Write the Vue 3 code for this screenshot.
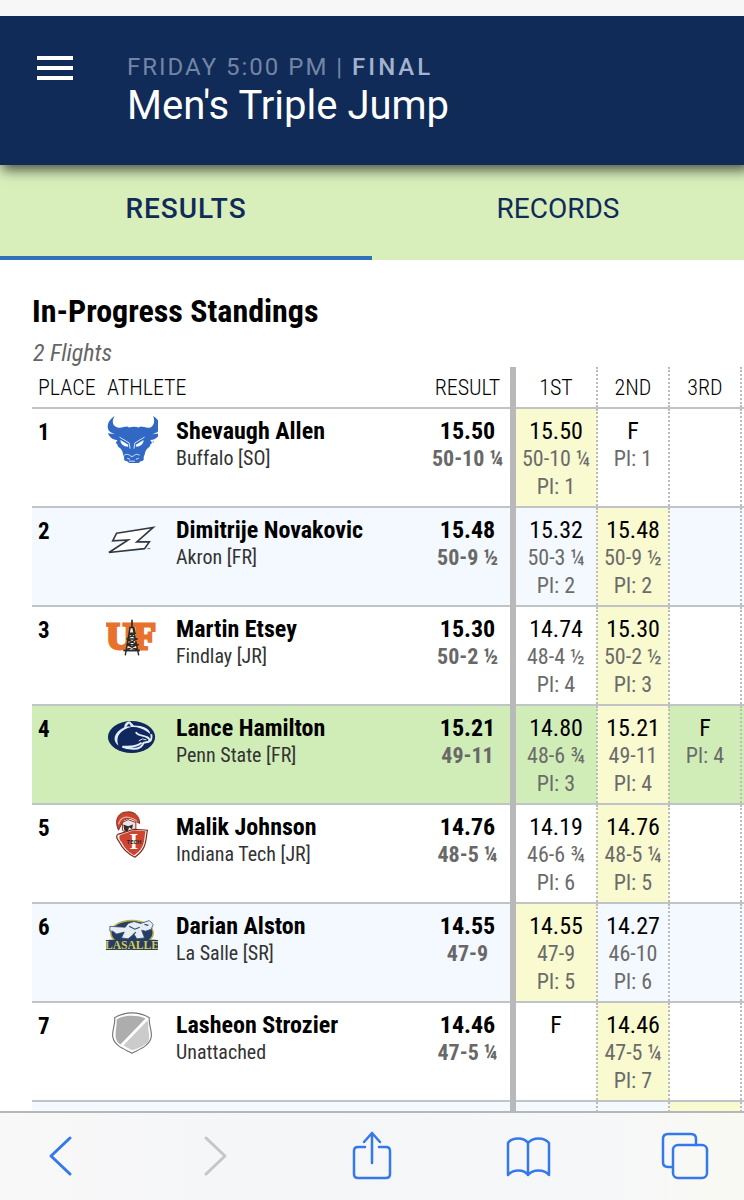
<script setup>
import { ref } from 'vue'

const tab = ref('results')
const rounds = ['1st', '2nd', '3rd', '']

const athletes = [
  { place: 1, logo: 'buffalo', name: 'Shevaugh Allen', team: 'Buffalo [SO]', mark: '15.50', imperial: '50-10 ¼',
    attempts: [{ mark: '15.50', imperial: '50-10 ¼', pl: 1, best: true }, { mark: 'F', pl: 1 }, {}, {}] },
  { place: 2, logo: 'akron', name: 'Dimitrije Novakovic', team: 'Akron [FR]', mark: '15.48', imperial: '50-9 ½',
    attempts: [{ mark: '15.32', imperial: '50-3 ¼', pl: 2 }, { mark: '15.48', imperial: '50-9 ½', pl: 2, best: true }, {}, {}] },
  { place: 3, logo: 'findlay', name: 'Martin Etsey', team: 'Findlay [JR]', mark: '15.30', imperial: '50-2 ½',
    attempts: [{ mark: '14.74', imperial: '48-4 ½', pl: 4 }, { mark: '15.30', imperial: '50-2 ½', pl: 3, best: true }, {}, {}] },
  { place: 4, logo: 'pennstate', name: 'Lance Hamilton', team: 'Penn State [FR]', mark: '15.21', imperial: '49-11', active: true,
    attempts: [{ mark: '14.80', imperial: '48-6 ¾', pl: 3 }, { mark: '15.21', imperial: '49-11', pl: 4, best: true }, { mark: 'F', pl: 4 }, {}] },
  { place: 5, logo: 'indiana', name: 'Malik Johnson', team: 'Indiana Tech [JR]', mark: '14.76', imperial: '48-5 ¼',
    attempts: [{ mark: '14.19', imperial: '46-6 ¾', pl: 6 }, { mark: '14.76', imperial: '48-5 ¼', pl: 5, best: true }, {}, {}] },
  { place: 6, logo: 'lasalle', name: 'Darian Alston', team: 'La Salle [SR]', mark: '14.55', imperial: '47-9',
    attempts: [{ mark: '14.55', imperial: '47-9', pl: 5, best: true }, { mark: '14.27', imperial: '46-10', pl: 6 }, {}, {}] },
  { place: 7, logo: 'unattached', name: 'Lasheon Strozier', team: 'Unattached', mark: '14.46', imperial: '47-5 ¼',
    attempts: [{ mark: 'F' }, { mark: '14.46', imperial: '47-5 ¼', pl: 7, best: true }, {}, {}] },
  { attempts: [{}, {}, { best: true }, {}] }
]
</script>

<template>
  <div class="screen">
    <header class="app-bar">
      <button class="menu" type="button" aria-label="Menu"><i></i><i></i><i></i></button>
      <div class="titles">
        <p class="when">FRIDAY 5:00 PM | <b>FINAL</b></p>
        <h1>Men's Triple Jump</h1>
      </div>
    </header>

    <nav class="tabs">
      <button type="button" :class="{ on: tab === 'results' }" @click="tab = 'results'">RESULTS</button>
      <button type="button" :class="{ on: tab === 'records' }" @click="tab = 'records'">RECORDS</button>
    </nav>

    <main>
      <h2>In-Progress Standings</h2>
      <p class="flights">2 Flights</p>
      <table>
        <colgroup>
          <col class="c-place" /><col class="c-logo" /><col /><col class="c-result" />
          <col class="c-first" /><col v-for="n in 3" :key="n" class="c-round" />
        </colgroup>
        <thead>
          <tr>
            <th class="place">PLACE</th>
            <th class="athlete" colspan="2">ATHLETE</th>
            <th class="result">RESULT</th>
            <th v-for="r in rounds" :key="r" class="round">{{ r }}</th>
          </tr>
        </thead>
        <tbody>
          <tr v-for="(a, i) in athletes" :key="i" :class="{ active: a.active }">
            <td class="place">{{ a.place }}</td>
            <td class="logo">
              <svg v-if="a.logo === 'buffalo'" viewBox="0 0 54 54" aria-hidden="true">
                <path fill="#3068c4" d="M9 2C4 5 1 10 2 15c1 4 5 5 8 6l-8-1c2 5 6 7 10 7l-2 3c3 1 1 3 4 5 4 3 3 6 5 10-1 3 1 4 3 4l2 2h10l2-2c2 0 4-1 3-4 2-4 1-7 5-10 3-2 1-4 4-5l-2-3c4 0 8-2 10-7l-8 1c3-1 7-2 8-6 1-5-2-10-7-13 2 5 1 10-3 12-4 1-7-1-10-1l-2 1c-3-1-7-1-10 0l-2-1c-3 0-6 2-10 1C6 12 6 7 9 2Z" />
                <path fill="#fff" d="m15 27 8 5v2c-5 0-8-3-8-7Zm24 0-8 5v2c5 0 8-3 8-7Z" />
                <path fill="none" stroke="#dce8fb" stroke-width="1" d="m14 24 10 6 1 6m15-12-10 6-1 6M19 43c2-2 5-1 7 1h2c2-2 5-3 7-1m-13 3 3 1m9-1-3 1m-7 2h6" />
                <circle cx="49" cy="29" r=".6" fill="#3068c4" />
              </svg>
              <svg v-else-if="a.logo === 'akron'" viewBox="0 0 54 54" aria-hidden="true">
                <path fill="#fff" stroke="#333940" stroke-width="1.7" d="M11 21 49 15 32 30h13l-5 7-37 4 20-13-16 1Z" />
                <path stroke="#59636b" d="M43 37h3" />
              </svg>
              <svg v-else-if="a.logo === 'findlay'" viewBox="0 0 54 54" aria-hidden="true">
                <g class="uf">
                  <text x="0" y="38">U</text><text x="28" y="38">F</text>
                </g>
                <path fill="#eee9df" stroke="#292a2a" stroke-width="1.5" d="m25 16-5 29m8-29 6 29M25 16h4l1 6h-6Zm-1 6 8 6-10 6 12 6M30 22l-8 6 10 6-12 6m4-18h7m-9 6h11m-12 6h13m-15 6h16" />
                <path stroke="#292a2a" stroke-width="1.7" d="M27 8v8M18 40h17" />
              </svg>
              <svg v-else-if="a.logo === 'pennstate'" viewBox="0 0 54 54" aria-hidden="true">
                <ellipse cx="26.500" cy="27" rx="24.500" ry="16.500" fill="#10285b" />
                <path fill="#dfedf8" d="M19 17c0-4 3-7 6-6l4 4c9 0 17 3 17 9l-4-3c-6-4-14-6-20-3-9 4-12 10-9 18C6 31 8 22 19 17Z" />
                <path fill="#10285b" d="m21 16 3-3 2 3Z" />
                <path fill="none" stroke="#dfedf8" stroke-width="2" d="M31 22c2 4 7 3 11 5 3 1 4 3 2 5l-5 1c-2 5-7 7-13 6-4 0-7-1-9-2 7 0 14 1 20-4M47 24c1 5 0 7-3 8" />
                <path fill="none" stroke="#dfedf8" d="m34 31 4-2 4 1" />
              </svg>
              <svg v-else-if="a.logo === 'indiana'" viewBox="0 0 54 54" aria-hidden="true">
                <path fill="#c8452f" stroke="#8a2c22" d="M13 21C8 10 13 2 22 2c7-1 13 4 13 12l-4-2c-4-4-9-4-13-1Z" />
                <path fill="none" stroke="#f0b0a0" stroke-width="1.200" d="M13 15c1-6 6-9 12-7 4 1 6 2 7 4" />
                <path fill="#e9e4e1" stroke="#852c27" d="m17 13 6-3 8 3v9l-8 3-6-4Z" />
                <path fill="#342b2d" d="m18 15 5 2 5-2-1 5-3-2-2 6-3-3Z" />
                <path fill="#f2ede7" stroke="#7a2620" stroke-width="1.200" d="M13 25 29 20l14 1c-2 10 0 19-13 28-7-3-12-7-17-17-2-2-3-6 0-7Z" />
                <path fill="#ce4430" d="m15 26 14-5 12 1c-2 10 0 17-12 25-6-3-10-8-13-14-2-2-3-5-1-7Z" />
                <text x="29" y="41" class="crest-i">I</text>
                <text x="29" y="35" class="crest-tech">TECH</text>
              </svg>
              <svg v-else-if="a.logo === 'lasalle'" viewBox="0 0 54 54" aria-hidden="true">
                <ellipse cx="27" cy="25" rx="22" ry="13" fill="#263d65" stroke="#b7ae46" stroke-width="1.500" />
                <path fill="#263d65" d="M3 32h49v10H3Z" />
                <path fill="#e6edf4" stroke="#34496a" stroke-width=".8" d="m4 18 16 1 3-4 6-2 7 2 9-3 4 4-2 5-6 2-4-1 3 8-8 1-3-5-6 5-7-1 3-6-8 2-4-3H4Z" />
                <path fill="none" stroke="#34496a" stroke-width="1.200" d="m24 18 6 3 5-2m5-3 4 1m-13 7-3 3" />
                <text x="27" y="42" class="salle">LASALLE</text>
              </svg>
              <svg v-else-if="a.logo === 'unattached'" viewBox="0 0 54 54" aria-hidden="true">
                <path fill="#fff" stroke="#777" stroke-width="1.200" d="M27 5c6 0 13 2 18 5-1 7 3 13 2 20-2 10-13 13-20 17C20 43 9 40 7 30 6 23 10 17 9 10c5-3 12-5 18-5Z" />
                <path fill="#adadad" d="M27 8c6 0 10 1 14 3L15 38C6 32 12 21 11 12c4-3 10-4 16-4Z" />
                <path fill="#cbcbcb" d="m43 13 1 4c-1 7 3 14-1 19-4 4-11 6-16 8l-9-5Z" />
              </svg>
            </td>
            <td class="athlete"><strong>{{ a.name }}</strong><span>{{ a.team }}</span></td>
            <td class="result"><strong>{{ a.mark }}</strong><span>{{ a.imperial }}</span></td>
            <td v-for="(t, n) in a.attempts" :key="n" class="round" :class="{ best: t.best }">
              <strong v-if="t.mark">{{ t.mark }}</strong>
              <span v-if="t.imperial">{{ t.imperial }}</span>
              <span v-if="t.pl">Pl: {{ t.pl }}</span>
            </td>
          </tr>
        </tbody>
      </table>
    </main>

    <footer class="toolbar">
      <button type="button" aria-label="Back"><svg viewBox="0 0 48 48"><path class="thick" d="M34 6 15 24l19 18" /></svg></button>
      <button type="button" aria-label="Forward" disabled><svg viewBox="0 0 48 48"><path class="thick" d="m14 6 19 18-19 18" /></svg></button>
      <button type="button" aria-label="Share"><svg viewBox="0 0 48 48"><path d="M17 15h-7q-4 0-4 4v23q0 4 4 4h28q4 0 4-4V19q0-4-4-4h-7M24 31V1m-8 9 8-9 8 9" /></svg></button>
      <button type="button" aria-label="Bookmarks"><svg viewBox="0 0 48 48"><path d="M24 11v32C20 37 9 37 4 43V11C8 5 20 5 24 11c5-6 16-6 21 0v32c-5-6-16-6-21 0" /></svg></button>
      <button type="button" aria-label="Tabs"><svg viewBox="0 0 48 48"><path d="M12 35H8q-5 0-5-5V7q0-5 5-5h23q5 0 5 5v6" /><rect x="13" y="13" width="34" height="33" rx="5" /></svg></button>
    </footer>
  </div>
</template>

<style>
body { margin: 0; }
</style>

<style scoped>
* { box-sizing: border-box; }
.screen {
  height: 100vh;
  display: flex;
  flex-direction: column;
  overflow: hidden;
  border-top: 16px solid #f7f7f7;
  background: #fff;
  color: #000;
  font-family: "Roboto Condensed", "Liberation Sans Narrow", Roboto, sans-serif;
}
button { border: 0; padding: 0; background: none; font: inherit; color: inherit; cursor: pointer; }
h1, h2, p { margin: 0; }

.app-bar {
  position: relative;
  z-index: 1;
  flex: none;
  display: flex;
  gap: 54px;
  padding: 36px 37px 35px;
  background: #102b57;
  box-shadow: 4px 3px 12px 2px rgba(0, 0, 0, .65);
  font-family: Roboto, sans-serif;
}
.menu { width: 36px; height: 32px; display: flex; flex-direction: column; justify-content: center; gap: 6px; }
.menu i { height: 4px; background: #fff; }
.when { font-size: 24px; line-height: 30px; letter-spacing: 2px; color: #7385a5; }
.when b { font-weight: 500; letter-spacing: 3px; color: #a3b2cf; }
h1 { font-size: 40px; line-height: 48px; font-weight: 400; color: #fff; }

.tabs { flex: none; display: flex; background: #d8eebb; font-family: Roboto, sans-serif; }
.tabs button { flex: 1; height: 95px; padding-bottom: 4px; border-bottom: 4px solid transparent; font-size: 28px; color: #102b57; }
.tabs .on { border-color: #3171b7; font-weight: 500; letter-spacing: 1px; }

main { flex: 1; min-height: 0; overflow: hidden; padding: 32px 0 0 32px; }
h2 { font-size: 32px; line-height: 38px; font-weight: 700; }
.flights { font-size: 24px; line-height: 28px; padding-top: 9px; padding-left: 1px; font-style: italic; color: #666; }
table { width: calc(100% + 69px); table-layout: fixed; border-collapse: collapse; }
.c-place { width: 69px; }
.c-logo { width: 69px; }
.c-result { width: 90px; }
.c-first { width: 84px; }
.c-round { width: 72px; }
th { height: 41px; padding: 2px 0 0; font-size: 22px; line-height: 38px; font-weight: 300; text-align: left; }
td { height: 99px; padding: 8px 0 0; vertical-align: top; font-size: 22px; line-height: 28px; border-top: 2px solid #c1c4c7; }
.place { padding-left: 6px; }
td.place { padding-top: 10px; font-size: 23px; font-weight: 700; }
th.athlete { padding-left: 6px; }
.logo svg { display: block; width: 52px; height: 52px; margin-left: 5px; }
td.logo { padding-top: 5px; }
td.athlete { padding-left: 6px; white-space: nowrap; }
td.athlete span { font-size: 20px; line-height: 26px; color: #333; }
.result, .round { text-align: center; white-space: nowrap; }
.result { padding-left: 2px; }
.round { text-transform: uppercase; border-left: 2px dotted #bbb; }
td.round span { text-transform: none; }
.result + .round { border-left: 6px solid #b9b9b9; }
td strong, td span { display: block; }
td strong { font-size: 24px; }
td.result span { font-weight: 700; color: #686868; }
td.round strong { font-weight: 400; }
td.round span { color: #6b6b6b; }
tbody tr:nth-child(even) { background: #f3f9fe; }
tbody tr.active { background: #d0edb8; }
.best { background: #f9fad0; }
.uf { font: 700 39px "Liberation Serif", serif; fill: #e8712b; stroke: #e8712b; stroke-width: 3px; }
.crest-i { font: 700 23px "Liberation Serif", serif; fill: #fff; text-anchor: middle; }
.crest-tech { font: 700 6px Roboto, sans-serif; fill: #292929; text-anchor: middle; }
.salle { font: 700 12px "Liberation Serif", serif; fill: #d9cc40; stroke: #263d65; stroke-width: 2px; paint-order: stroke; text-anchor: middle; }

.toolbar {
  position: relative;
  flex: none;
  display: flex;
  justify-content: space-between;
  height: 89px;
  padding: 19px 36px 20px;
  border-top: 2px solid #b5b7b9;
  background: linear-gradient(90deg, #f8f8f8, #f5f6f8 30%, #f6f7f9 80%, #f9f9f3);
}
.toolbar button { width: 48px; height: 48px; color: #3478eb; }
.toolbar button:disabled { color: #c5c6c8; }
.toolbar svg { display: block; width: 48px; height: 48px; fill: none; stroke: currentColor; stroke-width: 2.500; stroke-linecap: round; stroke-linejoin: round; overflow: visible; }
.toolbar .thick { stroke-width: 3; }
</style>
